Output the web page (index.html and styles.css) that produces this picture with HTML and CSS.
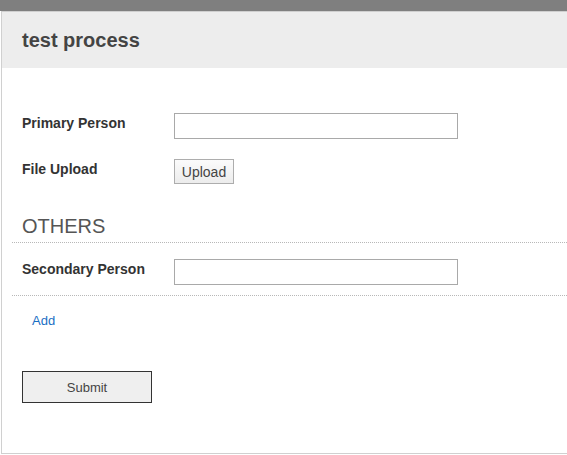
FILE: index.html
```html
<!DOCTYPE html>
<html lang="en">
<head>
  <meta charset="UTF-8">
  <title>test process</title>
  <meta name="viewport" content="width=device-width, initial-scale=1.0">
  <link rel="stylesheet" href="styles.css">
</head>
<body>
  <div class="topbar"></div>

  <div class="panel">
    <div class="panel-head">
      <h1>test process</h1>
    </div>

    <form class="form" autocomplete="off">
      <div class="row">
        <label class="lbl" for="primary">Primary Person</label>
        <input id="primary" type="text" class="txt">
      </div>
      <div class="row">
        <span class="lbl">File Upload</span>
        <button type="button" class="upload">Upload</button>
      </div>

      <h2 class="section">OTHERS</h2>
      <div class="section-body">
        <div class="row">
          <label class="lbl" for="secondary">Secondary Person</label>
          <input id="secondary" type="text" class="txt">
        </div>
      </div>

      <a href="#" class="add">Add</a>

      <button type="submit" class="submit">Submit</button>
    </form>
  </div>
</body>
</html>
```

FILE: styles.css
```css
body{margin:0;font-family:"Liberation Sans",Arial,sans-serif;color:#333;background:#fff}
.topbar{height:11px;background:#7f7f7f}

.panel{margin-left:1px;border-top:1px solid #cfcfcf;border-left:1px solid #d0d0d0;
       border-bottom:1px solid #d0d0d0}
.panel-head{height:56px;background:#ededed;display:flex;align-items:center;padding-left:20px}
.panel-head h1{margin:0;font-size:20px;font-weight:bold;color:#444;line-height:23px}

.form{padding:45px 0 50px}
.row{display:flex;align-items:flex-start;padding-left:20px}
.row + .row{margin-top:20px}
.lbl{width:152px;margin-top:2px;font-size:14px;font-weight:bold;line-height:16px;color:#333}
.txt{box-sizing:border-box;width:284px;height:26px;margin:0;border:1px solid #a9a9a9;
     padding:2px 4px;font:14px "Liberation Sans",Arial,sans-serif}
.upload{box-sizing:border-box;height:25px;width:60px;margin:0;padding:0;
        border:1px solid #adadad;border-radius:0;
        background:linear-gradient(#fbfbfb,#ececec);color:#444;
        font:14px "Liberation Sans",Arial,sans-serif}

/* sekcja z kropkowaną linią */
.section{margin:31px 0 0 10px;padding:0 0 4px 10px;border-bottom:1px dotted #b8b8b8;
         font-size:20px;font-weight:normal;line-height:23px;color:#555}
.section-body{margin-left:10px;padding:16px 0 10px;border-bottom:1px dotted #b8b8b8}
.section-body .row{padding-left:10px}

.add{display:block;width:max-content;margin:17px 0 0 30px;font-size:13px;line-height:15px;
     color:#1a6fc4;text-decoration:none}

.submit{display:block;box-sizing:border-box;width:130px;height:32px;margin:43px 0 0 20px;
        border:1px solid #333;background:#efefef;color:#444;border-radius:0;
        font:13px "Liberation Sans",Arial,sans-serif}
```
